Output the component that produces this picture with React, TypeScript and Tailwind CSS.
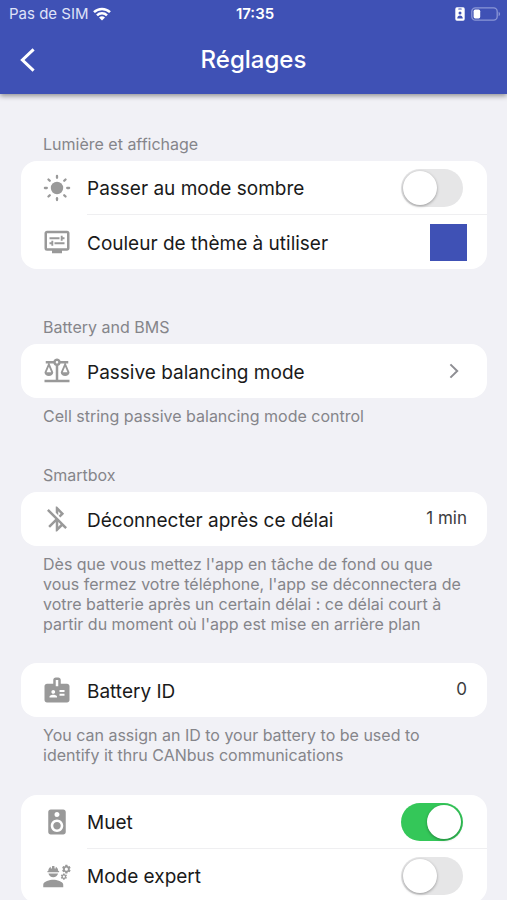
import { useState } from "react";
import type { ReactNode } from "react";
import {
  MdBadge,
  MdBluetoothDisabled,
  MdDisplaySettings,
  MdEngineering,
  MdOutlineBalance,
  MdSpeaker,
} from "react-icons/md";

const rays = [0, 45, 90, 135, 180, 225, 270, 315];

function SunIcon() {
  return (
    <svg viewBox="0 0 30 30" className="size-[30px]" aria-hidden="true">
      <circle cx="15" cy="15" r="6.2" fill="currentColor" />
      {rays.map((angle) => (
        <path
          key={angle}
          d="M15 2.9v1.9"
          stroke="currentColor"
          strokeWidth="2.3"
          strokeLinecap="round"
          transform={`rotate(${angle} 15 15)`}
        />
      ))}
    </svg>
  );
}

function WifiIcon() {
  return (
    <svg viewBox="0 0 18 14" className="h-[14px] w-[18px]" aria-hidden="true">
      <g fill="none" stroke="currentColor" strokeWidth="2.5">
        <path d="M1 5.2a11.4 11.4 0 0 1 16 0" />
        <path d="M4 8.4a7.1 7.1 0 0 1 10 0" />
      </g>
      <path d="M9 13.6 6 10.6a4.3 4.3 0 0 1 6 0z" fill="currentColor" />
    </svg>
  );
}

function StatusBar() {
  return (
    <div className="grid h-7 grid-cols-3 items-center pr-1.5 pl-[9px] text-[15px]">
      <div className="flex items-center gap-1 text-[#dfe3f8]">
        <span className="whitespace-nowrap">Pas de SIM</span>
        <span className="text-white">
          <WifiIcon />
        </span>
      </div>
      <span className="text-center font-semibold">17:35</span>
      <div className="flex items-center justify-end gap-1.5">
        <svg viewBox="0 0 10 14" className="h-[14px] w-[10px]" aria-hidden="true">
          <rect x="0.3" y="0.3" width="9.4" height="13.4" rx="1.6" fill="#fff" />
          <rect x="3.2" y="1.4" width="3.6" height="1.2" rx="0.6" fill="#3f51b5" />
          <circle cx="5" cy="6" r="1.5" fill="#3f51b5" />
          <path d="M2.2 11.4c0-4 5.6-4 5.6 0z" fill="#3f51b5" />
        </svg>
        <svg viewBox="0 0 30 14" className="h-[14px] w-[30px]" aria-hidden="true">
          <rect x="0.8" y="0.8" width="25.4" height="12.4" rx="3.6" fill="none" stroke="#8a96d6" strokeWidth="1.3" />
          <rect x="2.6" y="2.6" width="6.6" height="8.8" rx="1.6" fill="#fff" />
          <path d="M27.6 4.8c2 .8 2 3.6 0 4.4z" fill="#8a96d6" />
        </svg>
      </div>
    </div>
  );
}

function Header() {
  return (
    <header className="relative bg-[#3f51b5] text-white shadow-[0_2px_5px_rgba(0,0,0,0.4)]">
      <StatusBar />
      <div className="grid h-[66px] grid-cols-[56px_1fr_56px] items-center pb-0.5">
        <button type="button" aria-label="Retour" className="flex h-12 items-center pl-[19px]">
          <svg viewBox="0 0 18 26" className="h-[26px] w-[18px]" aria-hidden="true">
            <path d="M14.6 2.4 3.4 13l11.2 10.6" fill="none" stroke="currentColor" strokeWidth="3" />
          </svg>
        </button>
        <h1 className="text-center text-2xl font-medium">Réglages</h1>
      </div>
    </header>
  );
}

function Card({ children }: { children: ReactNode }) {
  return <div className="overflow-hidden rounded-2xl bg-white">{children}</div>;
}

type RowProps = {
  icon: ReactNode;
  label: string;
  htmlFor?: string;
  divider?: boolean;
  children?: ReactNode;
};

function Row({ icon, label, htmlFor, divider, children }: RowProps) {
  return (
    <div className="flex h-[54px] items-center pl-[21px]">
      <span className="mr-[15px] shrink-0 text-[#999]">{icon}</span>
      <div
        className={
          divider
            ? "flex h-full flex-1 items-center justify-between border-b border-[#efeff1] pr-5"
            : "flex h-full flex-1 items-center justify-between pr-5"
        }
      >
        {htmlFor ? (
          <label htmlFor={htmlFor} className="pt-[3px] text-[19px] leading-7 text-[#1a1a1a]">
            {label}
          </label>
        ) : (
          <span className="pt-[3px] text-[19px] leading-7 text-[#1a1a1a]">{label}</span>
        )}
        {children}
      </div>
    </div>
  );
}

function Toggle({ id, initial }: { id: string; initial: boolean }) {
  const [on, setOn] = useState(initial);
  return (
    <input
      id={id}
      type="checkbox"
      role="switch"
      checked={on}
      onChange={(event) => setOn(event.target.checked)}
      className="mr-1 flex h-[38px] w-[62px] shrink-0 cursor-pointer appearance-none items-center rounded-full bg-[#e6e6e7] p-0.5 before:size-[34px] before:rounded-full before:bg-white before:shadow-[0_1px_3px_rgba(0,0,0,0.35)] before:content-[''] checked:justify-end checked:bg-[#34c759]"
    />
  );
}

function Note({ children }: { children: ReactNode }) {
  return <p className="px-[22px] pt-2 text-base leading-5 text-[#85858a]">{children}</p>;
}

function SectionTitle({ children }: { children: ReactNode }) {
  return <h2 className="px-[22px] pb-[7px] text-base leading-5 text-[#85858a]">{children}</h2>;
}

export default function App() {
  return (
    <div className="h-screen overflow-hidden bg-[#f1f1f6] font-['Inter','Liberation_Sans',sans-serif]">
      <Header />
      <main className="pt-10 pr-5 pl-[21px]">
        <section className="mb-12">
          <SectionTitle>Lumière et affichage</SectionTitle>
          <Card>
            <Row icon={<SunIcon />} label="Passer au mode sombre" htmlFor="dark" divider>
              <Toggle id="dark" initial={false} />
            </Row>
            <Row icon={<MdDisplaySettings size={30} />} label="Couleur de thème à utiliser">
              <button type="button" aria-label="Couleur de thème" className="size-[37px] bg-[#3f51b5]" />
            </Row>
          </Card>
        </section>

        <section className="mb-[39px]">
          <SectionTitle>Battery and BMS</SectionTitle>
          <Card>
            <button type="button" className="block w-full text-left">
              <Row icon={<MdOutlineBalance size={30} />} label="Passive balancing mode">
                <svg viewBox="0 0 10 16" className="mr-2 h-4 w-[10px] text-[#8e8e93]" aria-hidden="true">
                  <path d="m1.4 1.4 6.8 6.6-6.8 6.6" fill="none" stroke="currentColor" strokeWidth="2" />
                </svg>
              </Row>
            </button>
          </Card>
          <Note>Cell string passive balancing mode control</Note>
        </section>

        <section className="mb-[29px]">
          <SectionTitle>Smartbox</SectionTitle>
          <Card>
            <button type="button" className="block w-full text-left">
              <Row icon={<MdBluetoothDisabled size={30} />} label="Déconnecter après ce délai">
                <span className="text-[17px] text-[#3c3c3e]">1 min</span>
              </Row>
            </button>
          </Card>
          <Note>
            Dès que vous mettez l'app en tâche de fond ou que vous fermez votre téléphone, l'app se déconnectera de
            votre batterie après un certain délai : ce délai court à partir du moment où l'app est mise en arrière plan
          </Note>
        </section>

        <section className="mb-[30px]">
          <Card>
            <button type="button" className="block w-full text-left">
              <Row icon={<MdBadge size={30} />} label="Battery ID">
                <span className="text-[17px] text-[#3c3c3e]">0</span>
              </Row>
            </button>
          </Card>
          <Note>You can assign an ID to your battery to be used to identify it thru CANbus communications</Note>
        </section>

        <section>
          <Card>
            <Row icon={<MdSpeaker size={30} />} label="Muet" htmlFor="mute" divider>
              <Toggle id="mute" initial={true} />
            </Row>
            <Row icon={<MdEngineering size={30} />} label="Mode expert" htmlFor="expert" divider>
              <Toggle id="expert" initial={false} />
            </Row>
          </Card>
        </section>
      </main>
    </div>
  );
}
